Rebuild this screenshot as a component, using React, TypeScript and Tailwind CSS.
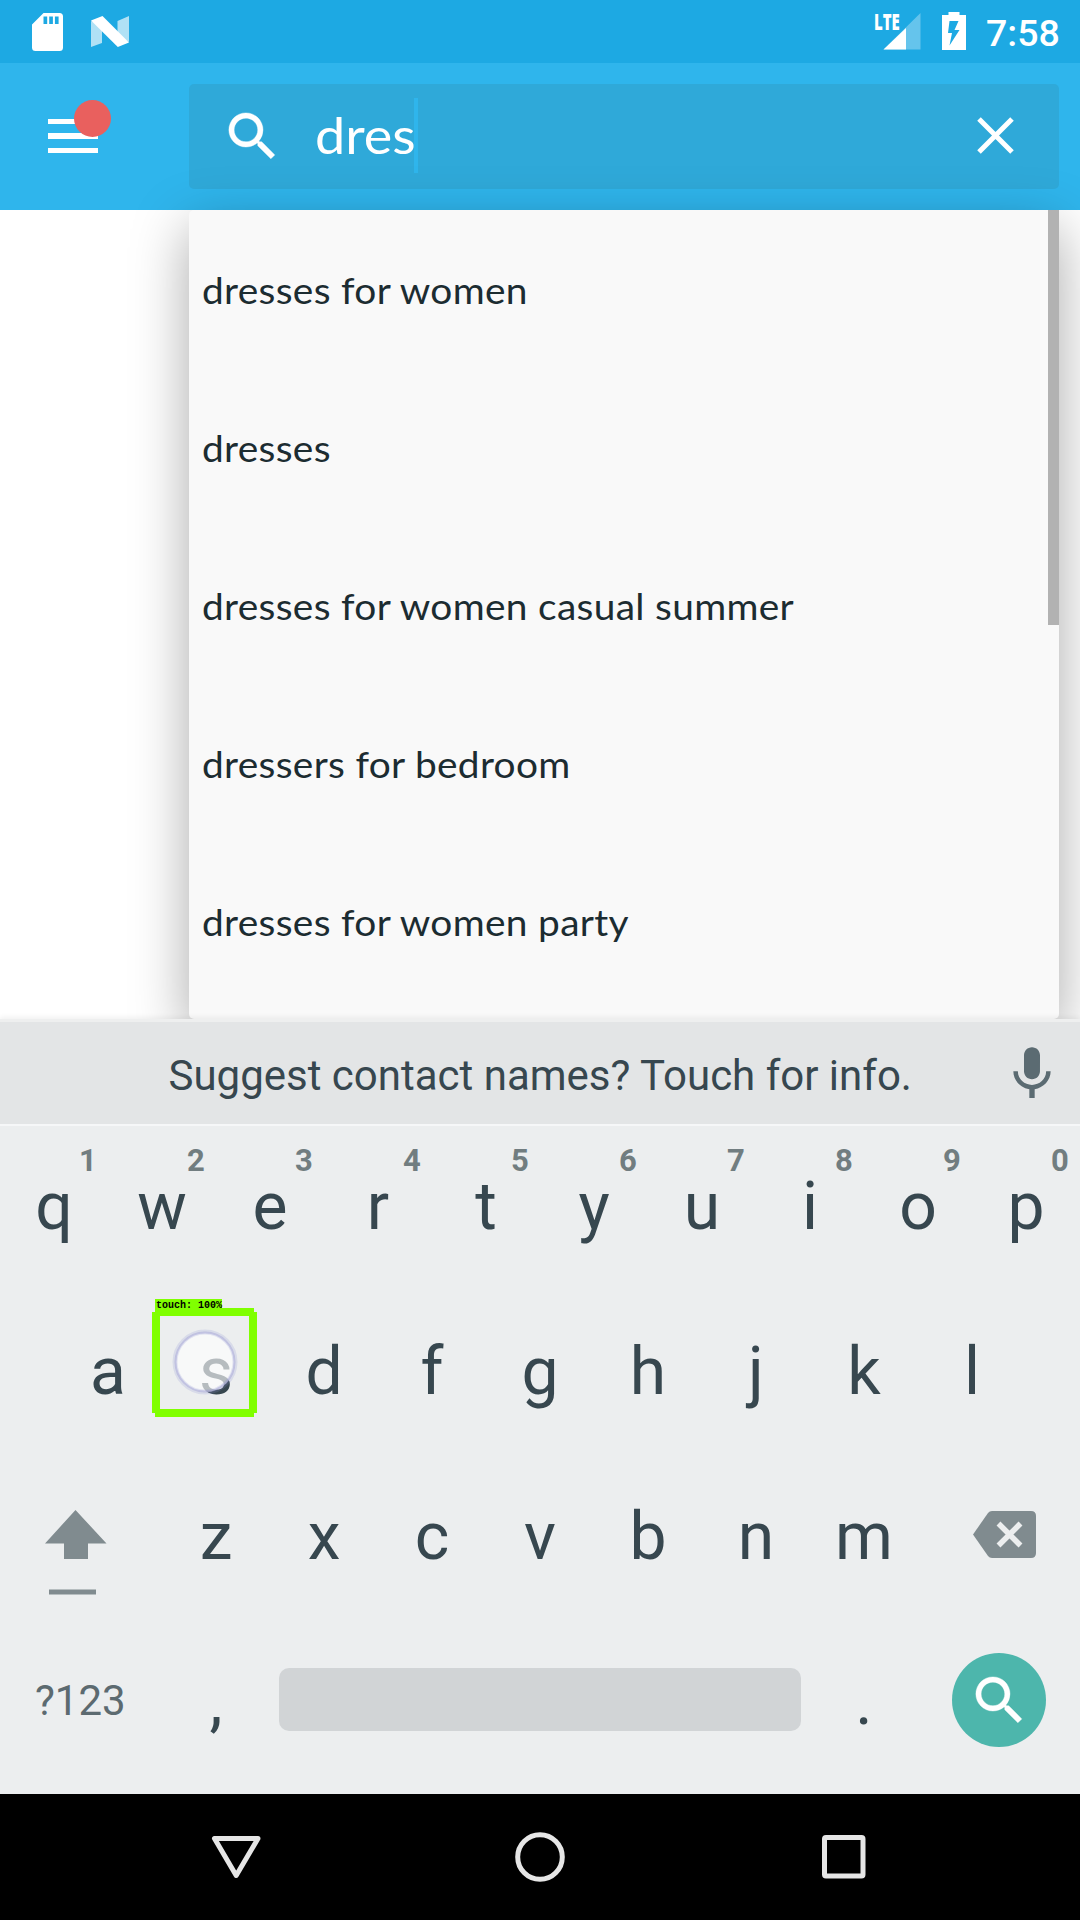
import React from "react";
import { clsx } from "clsx";

const suggestions = [
  "dresses for women",
  "dresses",
  "dresses for women casual summer",
  "dressers for bedroom",
  "dresses for women party",
];

function SearchGlyph() {
  return (
    <svg viewBox="0 0 24 24" className="h-[63px] w-[63px] shrink-0" fill="#fff" stroke="#fff" strokeWidth="0.15">
      <path d="M15.5 14h-.79l-.28-.27A6.471 6.471 0 0 0 16 9.5 6.5 6.5 0 1 0 9.5 16c1.61 0 3.09-.59 4.23-1.57l.27.28v.79l5 4.99L20.49 19l-4.99-5zm-6 0C7.01 14 5 11.99 5 9.5S7.01 5 9.5 5 14 7.01 14 9.5 11.99 14 9.5 14z" />
    </svg>
  );
}

function StatusBar() {
  return (
    <div className="flex h-[63px] items-start bg-[#1da9e3] pl-[32px] pr-[22px] text-white">
      <svg width="31" height="39" viewBox="0 0 31 39" className="mt-[12px]">
        <path
          fill="#fff"
          fillRule="evenodd"
          d="M11.500 1H27.500Q31 1 31 4.500V35.500Q31 39 27.500 39H3.500Q0 39 0 35.500V12.500ZM11.500 4.500V12H15.200V4.500ZM17.200 4.500V12H20.900V4.500ZM22.900 4.500V12H26.600V4.500Z"
        />
      </svg>
      <svg width="38" height="31" viewBox="0 0 38 31" className="ml-[28px] mt-[16px]">
        <path fill="#fff" opacity=".65" d="M0 5L11 10V27L0 31ZM26.500 5L38 0V26L26.500 20Z" />
        <path fill="#fff" d="M0 4.500L11.500 0L38 26.500L26.800 31Z" />
      </svg>
      <div className="relative ml-auto mt-[12px] h-[38px] w-[46px]">
        <svg width="46" height="38" viewBox="0 0 46 38">
          <path fill="#fff" opacity=".32" d="M45.500 1V37.500H8.500Z" />
          <path fill="#fff" d="M31 16V37.500H8.500Z" />
        </svg>
        <span className="absolute left-[-1px] top-[-1px] origin-left scale-x-[0.65] font-['Open_Sans'] text-[23px] font-extrabold leading-[20px]">
          LTE
        </span>
      </div>
      <svg width="24" height="38" viewBox="0 0 24 38" className="ml-[21px] mt-[12px]">
        <path fill="#fff" fillRule="evenodd" d="M6.500 0H17.500V3H24V38H0V3H6.500ZM7.500 9L6 21H10L7.500 33.500L17.500 18H12.500L16.500 9Z" />
      </svg>
      <span className="ml-[20px] mt-[12px] w-[72px] text-[37.500px] font-medium leading-[42px]">7:58</span>
    </div>
  );
}

function Header() {
  return (
    <header className="flex h-[147px] items-start bg-[#2fb5ec] pt-[21px]">
      <div className="relative ml-[48px] mt-[34.500px] flex w-[50px] flex-col gap-[9px]">
        <div className="h-[5.500px] bg-white" />
        <div className="h-[5.500px] bg-white" />
        <div className="h-[5.500px] bg-white" />
        <div className="absolute left-[26px] top-[-19px] h-[37px] w-[37px] rounded-full bg-[#e9605e]" />
      </div>
      <div className="ml-[91px] flex h-[105px] w-[870px] items-center rounded-[5px] bg-[#2fa9d9] pl-[32px]">
        <SearchGlyph />
        <span className="ml-[31px] mt-[-3px] w-[99px] origin-left scale-x-[1.08] font-['Lato'] text-[50px] leading-[60px] text-white">
          dres
        </span>
        <div className="mt-[-3px] h-[75px] w-[4px] bg-[#2fb5ec]" />
        <svg width="37" height="37" viewBox="0 0 37 37" className="ml-auto mr-[45px] mt-[-2px]">
          <path d="M2 2L35 35M35 2L2 35" stroke="#fff" strokeWidth="5" />
        </svg>
      </div>
    </header>
  );
}

function Results() {
  return (
    <main className="h-[809px] bg-white pl-[189px]">
      <div className="relative h-[809px] w-[870px] rounded-[5px] bg-[#f9f9f9] pl-[13px] pt-px shadow-[0_18px_56px_rgba(0,0,0,0.34)]">
        {suggestions.map((s) => (
          <div key={s} className="flex h-[158px] items-center">
            <span className="origin-left scale-x-[1.05] whitespace-nowrap font-['Lato'] text-[37px] leading-[44px] tracking-[0.300px] text-[#1c2c31]">
              {s}
            </span>
          </div>
        ))}
        <div className="absolute right-0 top-0 h-[415px] w-[11px] bg-[#b2b2b2]" />
      </div>
    </main>
  );
}

function Key({ label, hint }: { label: string; hint?: string }) {
  return (
    <div className="relative flex w-[108px] items-center justify-center text-[66px] leading-[80px] text-[#37474f]">
      {label}
      {hint && (
        <span className="absolute left-[58px] top-[21px] w-[60px] text-center text-[31px] font-bold leading-[31px] text-[#717d80]">
          {hint}
        </span>
      )}
    </div>
  );
}

function TouchMarker() {
  return (
    <div className="absolute left-[152px] top-[19px] h-[109px] w-[105px]">
      <svg width="105" height="109" viewBox="0 0 105 109">
        <circle cx="53" cy="54" r="30" fill="#fff" fillOpacity=".64" />
        <circle cx="53" cy="54" r="30" fill="none" stroke="#8d8fd0" strokeOpacity=".2" strokeWidth="5" />
        <circle cx="53" cy="54" r="29.500" fill="none" stroke="#9b9bd0" strokeOpacity=".45" strokeWidth="2" />
        <path fill="#80ff00" fillRule="evenodd" d="M3 0H102V4H105V105H102V109H3V105H0V4H3ZM8 8V101H97V8Z" />
      </svg>
      <span className="absolute left-[3px] top-[-9px] flex h-[13px] w-[67px] items-center whitespace-nowrap bg-[#80ff00] pl-px pt-px font-['Liberation_Mono'] text-[10px] font-bold leading-[12px] text-black">
        touch: 100%
      </span>
    </div>
  );
}

function KeyRow({ children, className }: { children: React.ReactNode; className?: string }) {
  return <div className={clsx("relative flex h-[165px]", className)}>{children}</div>;
}

function Keyboard() {
  return (
    <section className="relative">
      <div className="relative flex h-[105px] items-center border-t-[3px] border-[#eeefef] bg-[#e3e5e6] shadow-[0_-2px_5px_rgba(0,0,0,0.06)]">
        <span className="ml-[168.500px] mt-[6px] whitespace-nowrap text-[42px] leading-[50px] text-[#37474f]">
          Suggest contact names? Touch for info.
        </span>
        <svg viewBox="0 0 24 24" className="ml-auto mr-[16px] mt-[2px] h-[64px] w-[64px]" fill="#5b6b72">
          <path d="M12 14c1.660 0 2.990-1.340 2.990-3L15 5c0-1.660-1.340-3-3-3S9 3.340 9 5v6c0 1.660 1.340 3 3 3zm5.300-3c0 3-2.540 5.100-5.300 5.100S6.700 14 6.700 11H5c0 3.410 2.720 6.230 6 6.720V21h2v-3.280c3.280-.48 6-3.300 6-6.720h-1.700z" />
        </svg>
      </div>
      <div className="relative h-[670px] bg-[#eceeef] shadow-[inset_0_2px_0_#f6f7f8]">
        <KeyRow>
          {"qwertyuiop".split("").map((k, i) => (
            <Key key={k} label={k} hint={String((i + 1) % 10)} />
          ))}
        </KeyRow>
        <KeyRow className="pl-[54px]">
          {"asdfghjkl".split("").map((k) => (
            <Key key={k} label={k} />
          ))}
          <TouchMarker />
        </KeyRow>
        <KeyRow>
          <div className="w-[162px] pl-[45px] pt-[56px]">
            <svg width="62" height="86" viewBox="0 0 62 86" fill="#808b8f">
              <path d="M30.500 0L61.500 33.500H43V49H19V33.500H0Z" />
              <path d="M4 79.500H51V84.500H4Z" />
            </svg>
          </div>
          {"zxcvbnm".split("").map((k) => (
            <Key key={k} label={k} />
          ))}
          <svg width="63" height="47" viewBox="0 0 63 47" className="ml-[55px] mt-[57px]">
            <path fill="#808b8f" d="M19 0H58Q63 0 63 5V42Q63 47 58 47H19Q16.500 47 15 45L0 23.500L15 2Q16.500 0 19 0Z" />
            <path d="M25.500 12.500L47.500 34.500M47.500 12.500L25.500 34.500" stroke="#eceeef" strokeWidth="5.500" />
          </svg>
        </KeyRow>
        <KeyRow className="items-center">
          <span className="mt-[-2px] w-[162px] pl-[35px] text-[42px] leading-[50px] text-[#5c6a70]">?123</span>
          <Key label="," />
          <div className="ml-[9px] mt-[-4px] h-[63px] w-[522px] rounded-[10px] bg-[#d1d4d6]" />
          <div className="ml-[9px] flex">
            <Key label="." />
          </div>
          <div className="ml-[34px] mt-[-3px] flex h-[94px] w-[94px] items-center justify-center rounded-full bg-[#4db6ac]">
            <SearchGlyph />
          </div>
        </KeyRow>
      </div>
    </section>
  );
}

function NavBar() {
  return (
    <nav className="flex h-[126px] items-center justify-center gap-[244px] bg-black">
      <svg width="60" height="60" viewBox="0 0 60 60" fill="none" stroke="#e6e6e6" strokeWidth="5" strokeLinejoin="round">
        <path d="M8.500 11.500H52L30.200 48.500Z" />
      </svg>
      <svg width="60" height="60" viewBox="0 0 60 60" fill="none" stroke="#e6e6e6" strokeWidth="5">
        <circle cx="30" cy="30" r="22.300" />
      </svg>
      <svg width="60" height="60" viewBox="0 0 60 60" fill="none" stroke="#e6e6e6" strokeWidth="5">
        <rect x="10.500" y="10.500" width="38.500" height="38.500" rx="1.500" />
      </svg>
    </nav>
  );
}

export default function App() {
  return (
    <div className="h-[1920px] w-[1080px] overflow-hidden bg-white font-['Roboto',sans-serif]">
      <StatusBar />
      <Header />
      <Results />
      <Keyboard />
      <NavBar />
    </div>
  );
}
